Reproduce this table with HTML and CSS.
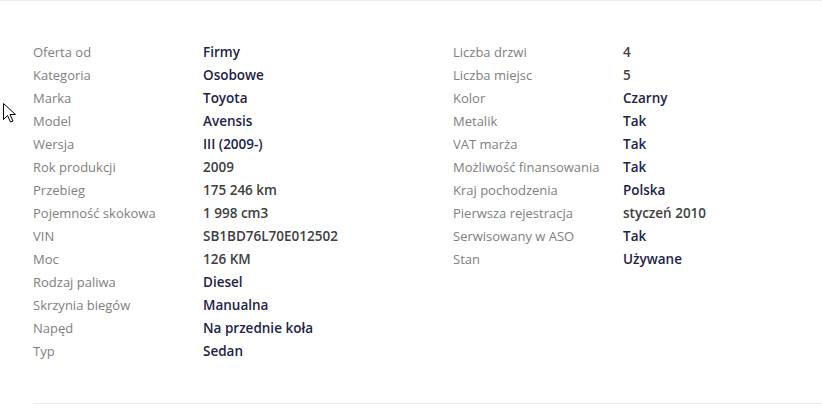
FILE: index.html
```html
<!DOCTYPE html>
<html lang="pl">
<head>
<meta charset="utf-8">
<link rel="stylesheet" href="styles.css">
</head>
<body>
<div class="topline"></div>
<section class="params">
  <div class="cols">
    <ul class="col">
      <li class="row"><span class="label">Oferta od</span><span class="value link">Firmy</span></li>
      <li class="row"><span class="label">Kategoria</span><span class="value link">Osobowe</span></li>
      <li class="row"><span class="label">Marka</span><span class="value link">Toyota</span></li>
      <li class="row"><span class="label">Model</span><span class="value link">Avensis</span></li>
      <li class="row"><span class="label">Wersja</span><span class="value link">III (2009-)</span></li>
      <li class="row"><span class="label">Rok produkcji</span><span class="value">2009</span></li>
      <li class="row"><span class="label">Przebieg</span><span class="value">175 246 km</span></li>
      <li class="row"><span class="label">Pojemność skokowa</span><span class="value">1 998 cm3</span></li>
      <li class="row"><span class="label">VIN</span><span class="value">SB1BD76L70E012502</span></li>
      <li class="row"><span class="label">Moc</span><span class="value">126 KM</span></li>
      <li class="row"><span class="label">Rodzaj paliwa</span><span class="value link">Diesel</span></li>
      <li class="row"><span class="label">Skrzynia biegów</span><span class="value link">Manualna</span></li>
      <li class="row"><span class="label">Napęd</span><span class="value link">Na przednie koła</span></li>
      <li class="row"><span class="label">Typ</span><span class="value link">Sedan</span></li>
    </ul>
    <ul class="col">
      <li class="row"><span class="label">Liczba drzwi</span><span class="value">4</span></li>
      <li class="row"><span class="label">Liczba miejsc</span><span class="value">5</span></li>
      <li class="row"><span class="label">Kolor</span><span class="value link">Czarny</span></li>
      <li class="row"><span class="label">Metalik</span><span class="value link">Tak</span></li>
      <li class="row"><span class="label">VAT marża</span><span class="value link">Tak</span></li>
      <li class="row"><span class="label">Możliwość finansowania</span><span class="value link">Tak</span></li>
      <li class="row"><span class="label">Kraj pochodzenia</span><span class="value link">Polska</span></li>
      <li class="row"><span class="label">Pierwsza rejestracja</span><span class="value">styczeń 2010</span></li>
      <li class="row"><span class="label">Serwisowany w ASO</span><span class="value link">Tak</span></li>
      <li class="row"><span class="label">Stan</span><span class="value link">Używane</span></li>
    </ul>
  </div>
</section>
<svg class="cursor" width="13" height="20" viewBox="0 0 13 20" aria-hidden="true">
  <path d="M0.5 0.5 L0.5 16.5 L4.5 12.5 L7.5 19 L10 18 L7 11.5 L12.5 11.5 Z" fill="#fff" stroke="#000" stroke-width="1"/>
</svg>
</body>
</html>
```
FILE: styles.css
```css
html, body {
  margin: 0;
  padding: 0;
  background: #fff;
}
body {
  font-family: "Open Sans", Lato, sans-serif;
  font-size: 13px;
  position: relative;
}
.topline {
  height: 1px;
  background: #ececec;
}
.params {
  margin-left: 33px;
  padding: 40px 0 40px;
  border-bottom: 1px solid #ececec;
}
.cols {
  display: grid;
  grid-template-columns: 420px 1fr;
}
.col {
  list-style: none;
  margin: 0;
  padding: 0;
}
.row {
  display: grid;
  grid-template-columns: 170px 1fr;
  line-height: 23px;
}
.label {
  color: #808080;
}
.value {
  color: #404040;
  font-weight: 600;
  font-size: 13.5px;
}
.value.link {
  color: #1d2347;
}
.cursor {
  position: absolute;
  left: 3px;
  top: 103px;
}
```
